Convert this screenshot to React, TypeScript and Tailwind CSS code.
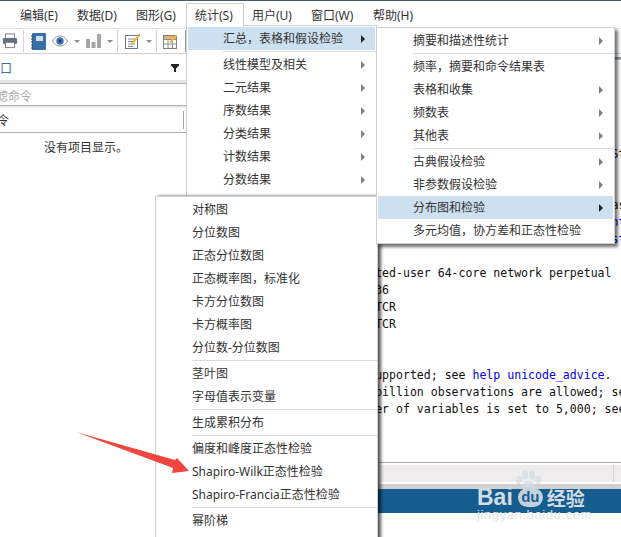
const uiFont = "font-['Noto_Sans','Noto_Sans_CJK_SC',sans-serif]";

type Entry = { label: string; sub?: boolean; active?: boolean } | 'sep';

const statsMenu: Entry[] = [
  { label: '汇总，表格和假设检验', sub: true, active: true },
  'sep',
  { label: '线性模型及相关', sub: true },
  { label: '二元结果', sub: true },
  { label: '序数结果', sub: true },
  { label: '分类结果', sub: true },
  { label: '计数结果', sub: true },
  { label: '分数结果', sub: true },
];

const summaryMenu: Entry[] = [
  { label: '摘要和描述性统计', sub: true },
  'sep',
  { label: '频率，摘要和命令结果表' },
  { label: '表格和收集', sub: true },
  { label: '频数表', sub: true },
  { label: '其他表', sub: true },
  'sep',
  { label: '古典假设检验', sub: true },
  { label: '非参数假设检验', sub: true },
  { label: '分布图和检验', sub: true, active: true },
  { label: '多元均值，协方差和正态性检验' },
];

const distMenu: Entry[] = [
  { label: '对称图' },
  { label: '分位数图' },
  { label: '正态分位数图' },
  { label: '正态概率图，标准化' },
  { label: '卡方分位数图' },
  { label: '卡方概率图' },
  { label: '分位数-分位数图' },
  'sep',
  { label: '茎叶图' },
  { label: '字母值表示变量' },
  'sep',
  { label: '生成累积分布' },
  'sep',
  { label: '偏度和峰度正态性检验' },
  { label: 'Shapiro-Wilk正态性检验' },
  { label: 'Shapiro-Francia正态性检验' },
  'sep',
  { label: '幂阶梯' },
];

function MenuRows({ items }: { items: Entry[] }) {
  return (
    <>
      {items.map((item, i) =>
        item === 'sep' ? (
          <div key={i} className="h-[3px] pl-[36px] flex items-center">
            <div className="h-px w-full bg-[#dcdcdc]" />
          </div>
        ) : (
          <div
            key={i}
            className={`h-[23px] mx-px pl-[35px] pr-[10px] flex items-center justify-between text-[12px] text-[#333] ${
              item.active ? 'bg-[#cce0f0]' : ''
            }`}
          >
            <span className="whitespace-nowrap">{item.label}</span>
            {item.sub && (
              <span
                className={`w-0 h-0 border-y-[4px] border-y-transparent border-l-[4px] ${
                  item.active ? 'border-l-[#222]' : 'border-l-[#808080]'
                }`}
              />
            )}
          </div>
        )
      )}
    </>
  );
}

function ToolbarSep() {
  return <div className="w-px h-[22px] bg-[#d4d4d4]" />;
}

function Caret() {
  return <span className="w-0 h-0 border-x-[3px] border-x-transparent border-t-[3px] border-t-[#8a8a8a]" />;
}

function Toolbar() {
  return (
    <div className="h-[26px] border-t border-b border-t-[#e2e2e2] border-b-[#d0d0d0] flex items-center overflow-hidden">
      <svg width="16" height="16" viewBox="0 0 18 17" className="ml-[2px]">
        <rect x="4" y="0.5" width="10" height="5" fill="#fff" stroke="#6d7780" />
        <rect x="1" y="5" width="16" height="7" rx="1.5" fill="#66727c" />
        <rect x="4" y="10" width="10" height="6" fill="#fff" stroke="#6d7780" />
      </svg>
      <div className="ml-[5px]"><ToolbarSep /></div>
      <svg width="15" height="17" viewBox="0 0 15 17" className="ml-[7px]">
        <rect x="1" y="0" width="14" height="17" rx="1" fill="#3a6ea8" />
        <rect x="5" y="3" width="7" height="5" fill="#cfe0f0" />
        <path d="M0 3h2M0 6h2M0 9h2M0 12h2M0 15h2" stroke="#1f3f66" />
      </svg>
      <svg width="16" height="12" viewBox="0 0 16 12" className="ml-[6px]">
        <path d="M0.5 6C3 2 5.500 1 8 1s5 1 7.500 5C13 10 10.500 11 8 11S3 10 0.500 6Z" fill="#fff" stroke="#8a8f94" />
        <circle cx="8" cy="6" r="3.700" fill="#3c70b4" />
        <circle cx="8" cy="6" r="1.500" fill="#1e3f70" />
      </svg>
      <div className="ml-[6px] flex"><Caret /></div>
      <svg width="15" height="14" viewBox="0 0 15 14" className="ml-[6px]">
        <path d="M0 5h4v9H0zM5.500 8h4v6h-4zM11 0h4v14h-4z" fill="#a6a6a6" />
      </svg>
      <div className="ml-[6px] flex"><Caret /></div>
      <div className="ml-[4px]"><ToolbarSep /></div>
      <svg width="15" height="16" viewBox="0 0 15 16" className="ml-[7px]">
        <rect x="0.500" y="2.500" width="12" height="13" fill="#fff" stroke="#6c7a86" />
        <path d="M3 6h7M3 8.500h7M3 11h7M3 13.500h5" stroke="#7c8a96" />
        <path d="M6 10 13 2l1.500 1.500-7 8z" fill="#f2b632" />
        <path d="M13 2l1-1 1 1-.5 1.500z" fill="#d85a4a" />
      </svg>
      <div className="ml-[6px] flex"><Caret /></div>
      <div className="ml-[4px]"><ToolbarSep /></div>
      <svg width="15" height="16" viewBox="0 0 15 16" className="ml-[6px]">
        <rect x="0.500" y="2.500" width="13" height="13" fill="#fff" stroke="#7d7d7d" />
        <path d="M0.500 6.500h13M0.500 11h13M5 2.500v13M9.500 2.500v13" stroke="#8f8f8f" />
        <rect x="1" y="3" width="12" height="3" fill="#e2b27a" />
        <path d="M6 9 13 1.500l1.500 1.500-7 7z" fill="#f2b632" />
      </svg>
      <div className="ml-[7px] w-px h-[22px] bg-[#9a9a9a]" />
    </div>
  );
}

function MonoLine({ children }: { children?: React.ReactNode }) {
  return <div className="h-[17px] leading-[17px] whitespace-pre">{children || ' '}</div>;
}

function ResultsPane() {
  return (
    <div className="flex-1 min-w-0 border-l border-[#d0d0d0] flex flex-col overflow-hidden">
      <div className="h-[408px] overflow-hidden">
        <div className="mt-[3px] h-[3px] border-t-2 border-b border-t-[#7f9fb2] border-b-[#c4c4c4]" />
        <div className="pt-[86px] pl-[63px] text-[11.55px] text-[#111] font-['DejaVu_Sans_Mono',monospace]">
          <MonoLine>                                                    StataCorp</MonoLine>
          <MonoLine />
          <MonoLine />
          <MonoLine>                                                    as</MonoLine>
          <MonoLine>                                                    <span className="text-[#0000ee]">http</span></MonoLine>
          <MonoLine>                                                    <span className="text-[#0000ee]">stata</span></MonoLine>
          <MonoLine />
          <MonoLine>            Unlimited-user 64-core network perpetual</MonoLine>
          <MonoLine>  Serial number:  36</MonoLine>
          <MonoLine>   Licensed to:  STCR</MonoLine>
          <MonoLine>                 STCR</MonoLine>
          <MonoLine />
          <MonoLine>Notes:</MonoLine>
          <MonoLine>   1. Unicode is supported; see <span className="text-[#0000ee]">help unicode_advice</span>.</MonoLine>
          <MonoLine>   2. More than 2 billion observations are allowed; see help obs_advice.</MonoLine>
          <MonoLine>   3. Maximum number of variables is set to 5,000; see help set_maxvar.</MonoLine>
        </div>
      </div>
      <div className="h-[3px] border-t border-[#a8a8a8] bg-white" />
      <div className="h-[17px] bg-[#eeecec] flex justify-end pr-[7px]">
        <div className="w-px h-full bg-[#d4d0d0]" />
      </div>
      <div className="h-[2px] bg-white" />
      <div className="h-[5px] bg-[#d0d0d0]" />
      <div className="h-[24px] bg-[#165d8f]" />
    </div>
  );
}

function LeftPanel() {
  return (
    <div className="w-[186px] shrink-0 overflow-hidden text-[12px] text-[#333]">
      <div className="h-[24px] mt-[2px] flex items-center justify-between pr-[7px]">
        <span className="-ml-[12px] pt-[2px] text-[#3a6ea8]">窗口</span>
        <svg width="8" height="8" viewBox="0 0 8 8">
          <path d="M0 0h8v1.500L5 4.500V8H3V4.500L0 1.500Z" fill="#222" />
        </svg>
      </div>
      <div className="h-[4px] bg-[#e6e6e6] border-b border-[#b0b0b0]" />
      <div className="h-[22px] flex items-center border-b border-[#b0b0b0]">
        <span className="-ml-[16px] pt-[4px] text-[#ababab]">过滤命令</span>
      </div>
      <div className="h-[2px] bg-[#ececec]" />
      <div className="h-[25px] flex items-center justify-between border-b border-[#b0b0b0] pr-[2px]">
        <span className="-ml-[15px] pt-[2px]">命令</span>
        <div className="w-px h-[18px] bg-[#a8a8a8]" />
      </div>
      <div className="pt-[6px] pl-[44px] h-[24px]">没有项目显示。</div>
    </div>
  );
}

export default function App() {
  return (
    <div className={`relative w-[621px] h-[537px] overflow-hidden bg-white ${uiFont}`}>
      <div className="h-px bg-[#4a5a68]" />
      {/* Menu bar */}
      <div className="h-[27px] pt-[2px] flex items-center pl-[20px] text-[12px] text-[#333] whitespace-nowrap">
        <span className="w-[57px]">编辑(E)</span>
        <span className="w-[59px]">数据(D)</span>
        <span className="w-[50px]">图形(G)</span>
        <span className="relative z-20 self-start w-[58px] h-[24px] bg-white border border-b-0 border-[#cfcfcf] pl-[8px] flex items-center">
          统计(S)
        </span>
        <span className="w-[59px] ml-[8px]">用户(U)</span>
        <span className="w-[62px]">窗口(W)</span>
        <span>帮助(H)</span>
      </div>
      <Toolbar />
      <div className="flex h-[483px]">
        <LeftPanel />
        <ResultsPane />
      </div>

      {/* Open menus */}
      <div className="absolute left-[186px] top-[25px] w-[191px] h-[172px] bg-white border border-[#cfcfcf] pt-px z-10">
        <MenuRows items={statsMenu} />
      </div>
      <div className="absolute left-[155px] top-[196px] w-[223px] h-[345px] bg-white border border-[#cfcfcf] pt-px z-10 shadow-[3px_0_3px_rgba(0,0,0,0.65)]">
        <MenuRows items={distMenu} />
      </div>
      <div className="absolute left-[376px] top-[27px] w-[239px] h-[217px] bg-white border border-[#cfcfcf] pt-px z-20 shadow-[3px_3px_3px_rgba(0,0,0,0.55)]">
        <MenuRows items={summaryMenu} />
      </div>

      {/* Red arrow annotation */}
      <svg width="130" height="60" viewBox="0 0 130 60" className="absolute left-[70px] top-[425px] z-30">
        <polygon points="6,7 105,35 107,33 119,46 102,48 103,43" fill="#f0463f" />
      </svg>

      {/* Baidu watermark */}
      <div className="absolute left-[477px] top-[468px] w-[112px] h-[56px] z-30 text-[#d3dce4]">
        <svg width="26" height="22" viewBox="0 0 26 22" className="absolute left-[38px] top-[2px] opacity-70">
          <ellipse cx="4" cy="10" rx="3" ry="4" fill="currentColor" />
          <ellipse cx="10" cy="5" rx="3" ry="4.500" fill="currentColor" />
          <ellipse cx="17" cy="5" rx="3" ry="4.500" fill="currentColor" />
          <ellipse cx="23" cy="10" rx="3" ry="4" fill="currentColor" />
          <ellipse cx="13.500" cy="16" rx="7" ry="5" fill="currentColor" />
        </svg>
        <div className="absolute left-0 top-[18px] flex items-center h-[22px] whitespace-nowrap font-['Liberation_Sans',sans-serif] font-bold text-[23px] leading-none">
          <span>Bai</span>
          <span className="ml-[5px] w-[25px] h-[19px] rounded-full bg-[#c4d2dd] text-[#165d8f] text-[15px] leading-[18px] text-center">du</span>
          <span className="ml-[4px] text-[19px] font-['Noto_Sans_CJK_SC',sans-serif]">经验</span>
        </div>
        <div className="absolute left-0 top-[39px] text-[13px] leading-[16px] font-['Liberation_Sans',sans-serif] tracking-[0.6px] text-[#e4e6e8] whitespace-nowrap">
          jingyan.baidu.com
        </div>
      </div>
    </div>
  );
}
